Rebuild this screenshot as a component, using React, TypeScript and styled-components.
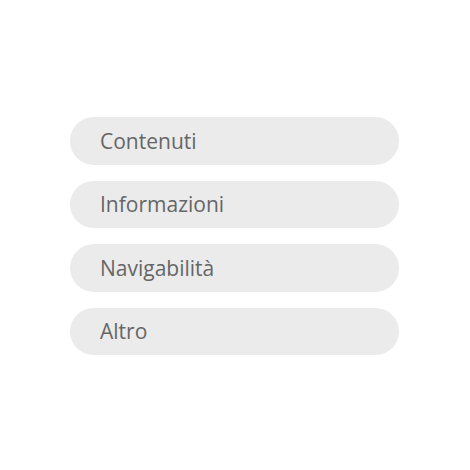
import React from "react";
import styled, { createGlobalStyle } from "styled-components";

const Global = createGlobalStyle`
  html, body { margin: 0; padding: 0; background: #ffffff; }
  body { font-family: "Open Sans", "Liberation Sans", sans-serif; }
`;

const Page = styled.div`
  width: 470px;
  height: 470px;
  box-sizing: border-box;
  padding: 117px 0 0 70px;
`;

const List = styled.div`
  display: flex;
  flex-direction: column;
  gap: 16px;
  width: 329px;
`;

const Pill = styled.button`
  display: flex;
  align-items: center;
  height: 47.5px;
  box-sizing: border-box;
  padding: 0 0 0 30px;
  border: none;
  border-radius: 24px;
  background: #ebebeb;
  color: #666666;
  font-family: "Open Sans", "Liberation Sans", sans-serif;
  font-size: 21px;
  text-align: left;
  cursor: pointer;
`;

const items = ["Contenuti", "Informazioni", "Navigabilità", "Altro"];

export default function App() {
  return (
    <>
      <Global />
      <Page>
        <List>
          {items.map((t) => (
            <Pill key={t}>{t}</Pill>
          ))}
        </List>
      </Page>
    </>
  );
}
